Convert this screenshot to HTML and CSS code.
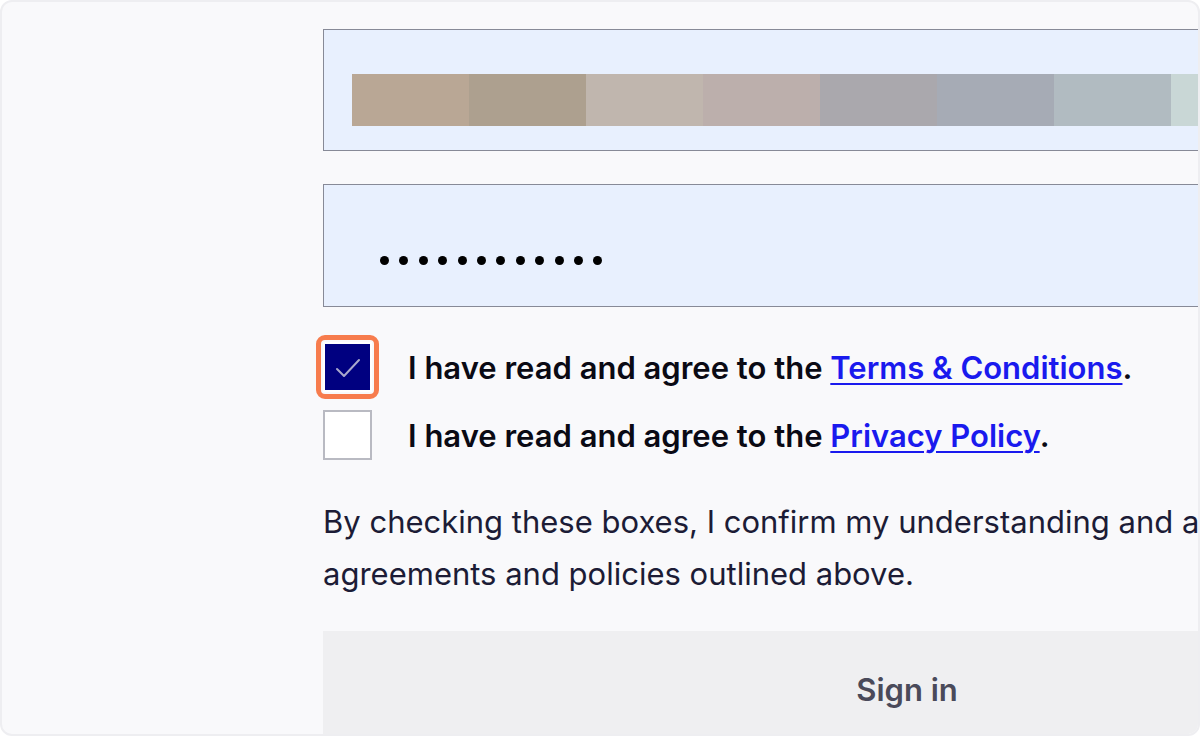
FILE: index.html
```html
<!DOCTYPE html>
<html lang="en">
<head>
<meta charset="utf-8">
<title>Sign in</title>
<link rel="stylesheet" href="styles.css">
</head>
<body>
<div class="frame">
  <form class="form">
    <div class="field field-email">
      <div class="blurred">
        <span class="blk" style="background:#b9a795"></span>
        <span class="blk" style="background:#ada08f"></span>
        <span class="blk" style="background:#c0b6ae"></span>
        <span class="blk" style="background:#bcafac"></span>
        <span class="blk" style="background:#aaa8ad"></span>
        <span class="blk" style="background:#a6abb5"></span>
        <span class="blk" style="background:#b1bbc1"></span>
        <span class="blk" style="background:#c9d7d6"></span>
      </div>
    </div>
    <div class="field field-password">
      <div class="dots" aria-label="password">
        <span class="dot"></span><span class="dot"></span><span class="dot"></span><span class="dot"></span>
        <span class="dot"></span><span class="dot"></span><span class="dot"></span><span class="dot"></span>
        <span class="dot"></span><span class="dot"></span><span class="dot"></span><span class="dot"></span>
      </div>
    </div>
    <div class="checks">
      <label class="check-row">
        <span class="box box-checked">
          <svg class="tick" viewBox="0 0 50 50" width="50" height="50"><path d="M14 27 L21 34 L36 18" fill="none" stroke="#a9a8cc" stroke-width="2" stroke-linecap="round" stroke-linejoin="round"/></svg>
        </span>
        <span class="check-text">I have read and agree to the <a href="#" class="link">Terms &amp; Conditions</a>.</span>
      </label>
      <label class="check-row">
        <span class="box"></span>
        <span class="check-text">I have read and agree to the <a href="#" class="link">Privacy Policy</a>.</span>
      </label>
    </div>
    <p class="note">By checking these boxes, I confirm my understanding and acceptance of the agreements and policies outlined above.</p>
    <button type="button" class="signin">Sign in</button>
  </form>
</div>
</body>
</html>
```
FILE: styles.css
```css
* { box-sizing: border-box; }
html, body { margin: 0; padding: 0; background: #ffffff; }
.frame {
  width: 1200px;
  height: 736px;
  border: 2px solid #eeeef1;
  border-radius: 12px;
  background: #f9f9fb;
  overflow: hidden;
  padding: 27px 0 0 321px;
  font-family: Inter, "Noto Sans", sans-serif;
}
.form {
  width: 1168px;
  display: flex;
  flex-direction: column;
}
.field {
  background: #e8f0fe;
  border: 1px solid #878a97;
}
.field-email {
  height: 122px;
  padding: 44px 0 0 28px;
}
.blurred {
  display: flex;
  height: 52px;
}
.blk {
  width: 117px;
  height: 52px;
  flex: none;
}
.field-password {
  margin-top: 33px;
  height: 123px;
  padding: 0 0 0 56px;
  display: flex;
  align-items: center;
}
.dots {
  display: flex;
  gap: 10.4px;
  margin-top: 30px;
}
.dot {
  width: 9px;
  height: 9px;
  border-radius: 50%;
  background: #000;
}
.checks {
  margin-top: 35px;
  display: flex;
  flex-direction: column;
  gap: 18px;
}
.check-row {
  display: flex;
  align-items: center;
  gap: 36px;
  height: 50px;
}
.box {
  position: relative;
  width: 49px;
  height: 50px;
  flex: none;
  background: #ffffff;
  border: 2px solid #b9bac2;
}
.box-checked {
  background: #000080;
  border: 2px solid #ffffff;
}
.box-checked::after {
  content: "";
  position: absolute;
  inset: -9px;
  border: 5px solid #f77c4d;
  border-radius: 9px;
}
.tick { position: absolute; left: -2px; top: -2px; }
.check-text {
  font-size: 31px;
  font-weight: 600;
  color: #0a0a14;
  white-space: nowrap;
}
.link {
  color: #1a1aee;
  text-decoration: underline;
  text-decoration-thickness: 2px;
  text-underline-offset: 4px;
}
.note {
  margin: 36px 0 0 0;
  font-size: 31px;
  line-height: 52px;
  color: #1c1c36;
  width: 1168px;
}
.signin {
  margin-top: 31px;
  height: 116px;
  width: 1168px;
  border: 0;
  background: #efeff1;
  font-family: Inter, "Noto Sans", sans-serif;
  font-size: 31px;
  font-weight: 600;
  color: #4a4a5a;
  padding: 0;
}
```
